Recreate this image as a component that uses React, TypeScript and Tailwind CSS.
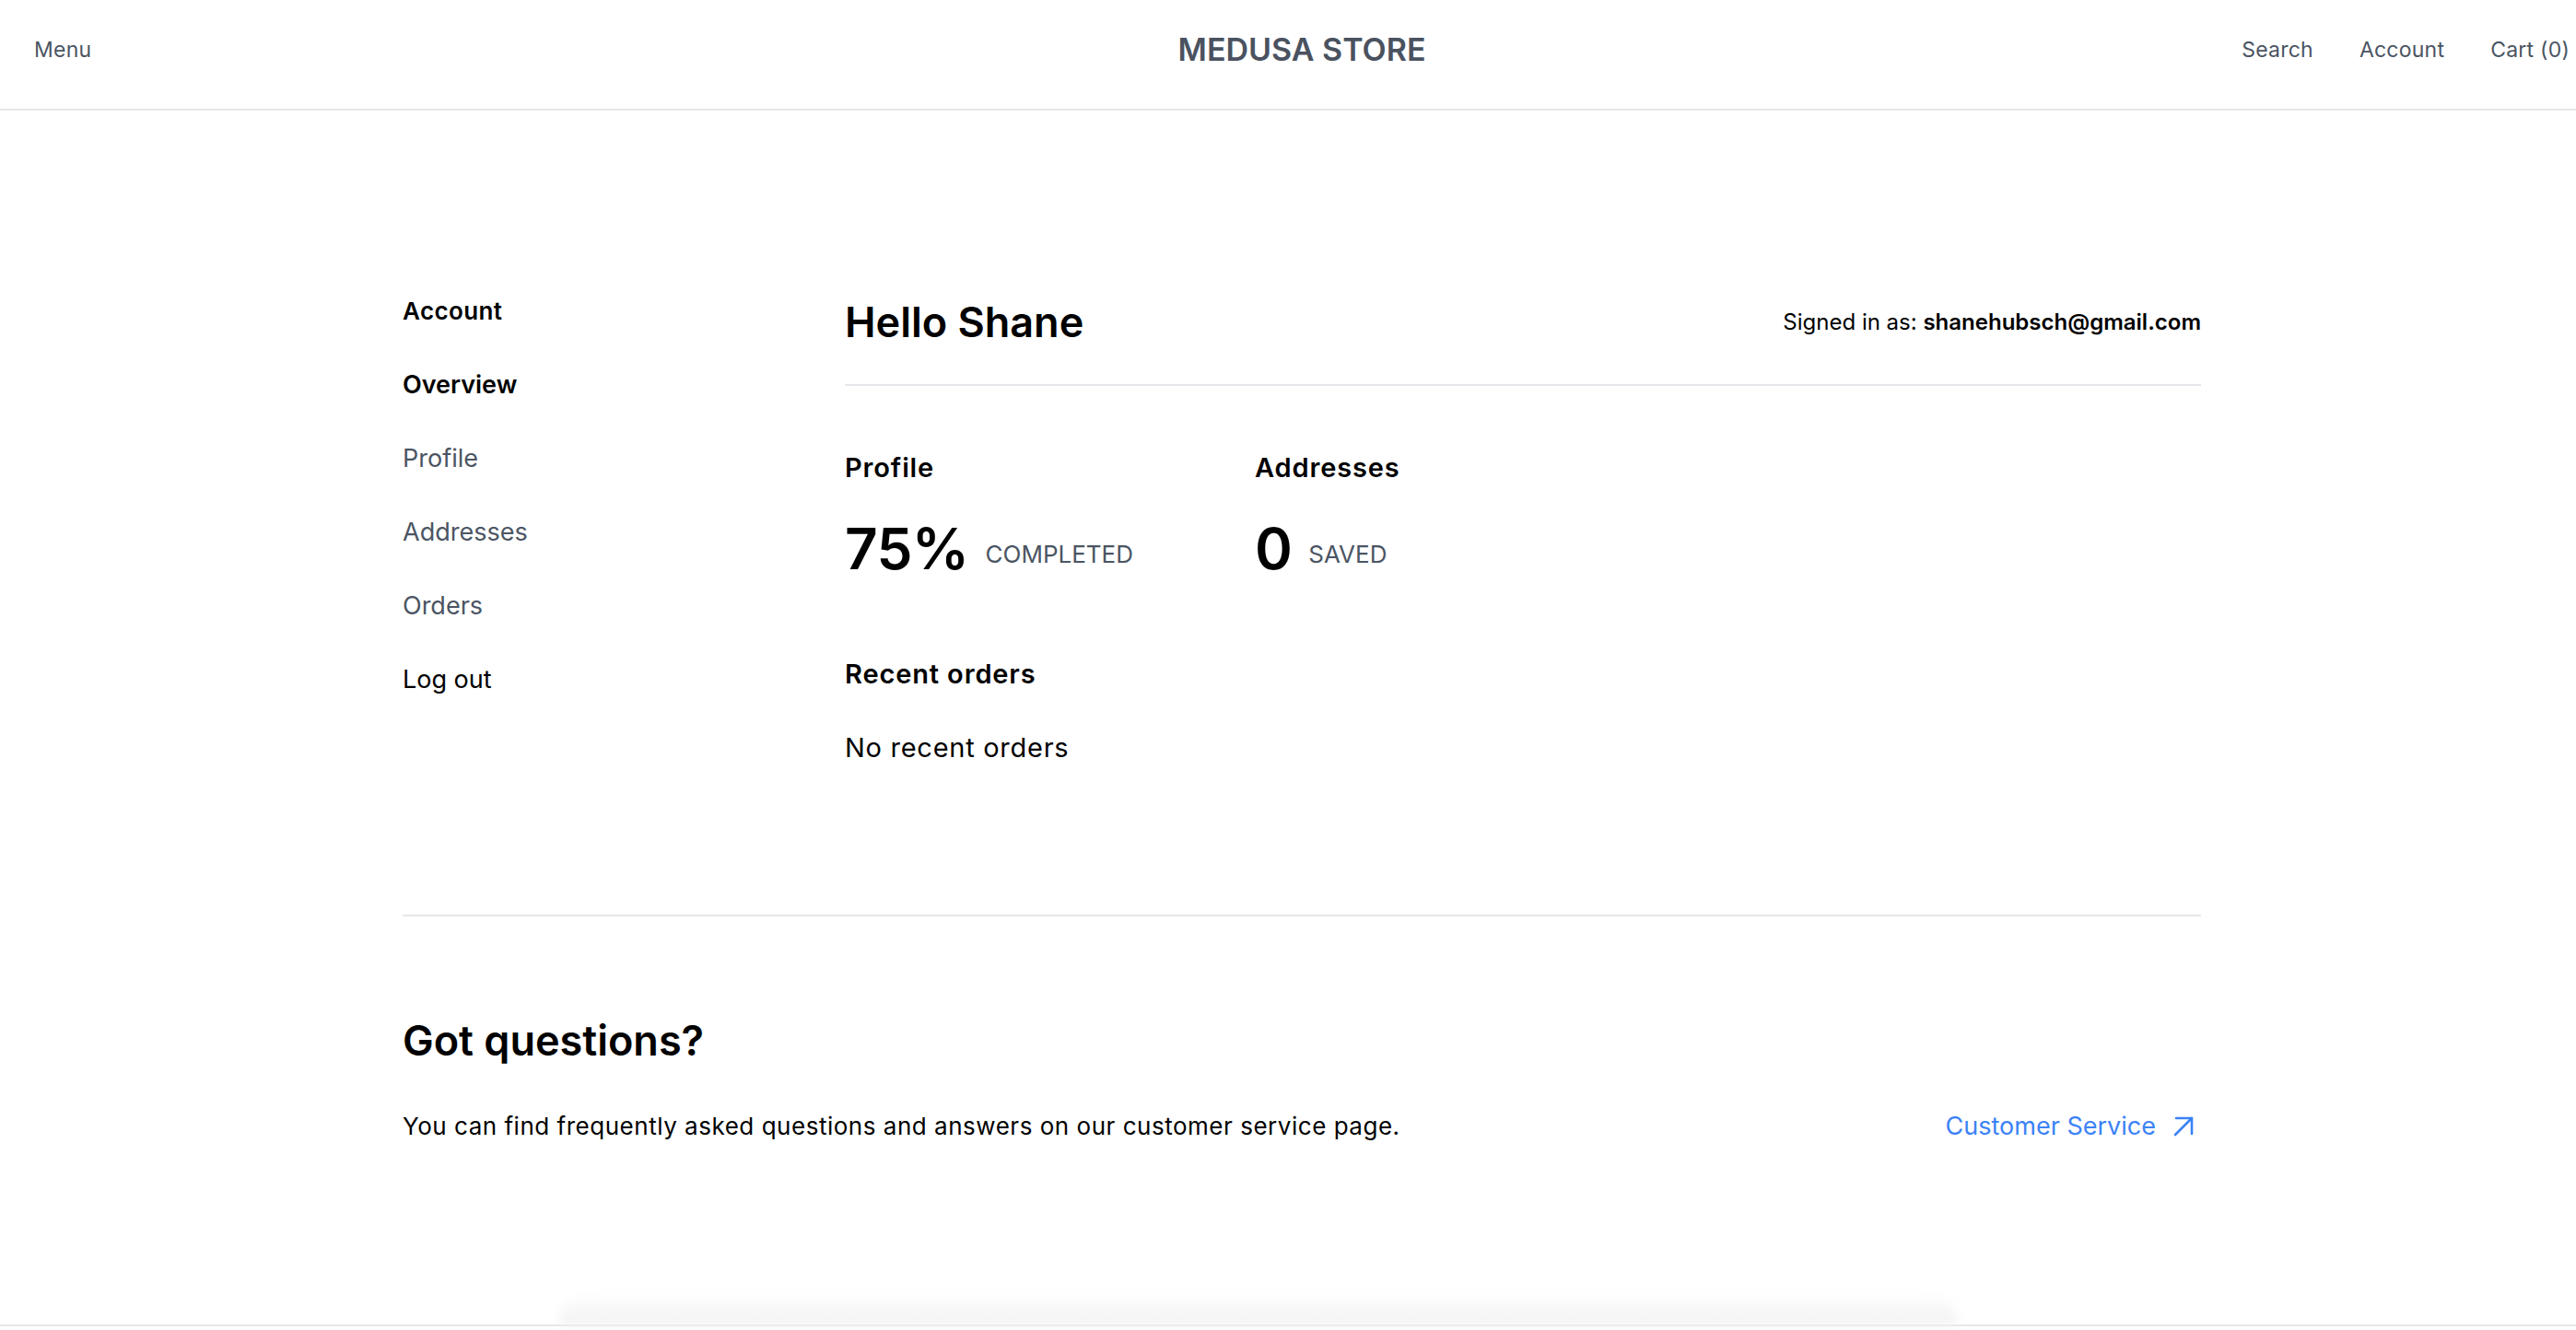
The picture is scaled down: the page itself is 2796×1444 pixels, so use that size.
function Header() {
  return (
    <header className="h-[120px] border-b-2 border-[#e5e7eb] bg-white">
      <nav className="h-full flex items-center px-[37px] pb-[10px] text-[#4b5563]">
        <div className="flex-1 text-[23px] leading-none tracking-[0.01em]">Menu</div>
        <div className="text-[34px] font-semibold uppercase leading-none text-[#4a5260]">Medusa Store</div>
        <div className="flex-1 flex justify-end gap-[50px] text-[23px] leading-none tracking-[0.01em]">
          <span>Search</span>
          <span>Account</span>
          <span>Cart (0)</span>
        </div>
      </nav>
    </header>
  );
}

function Sidebar() {
  return (
    <div className="flex flex-col gap-[53px] leading-none pt-[2px]">
      <h3 className="text-[26px] font-semibold tracking-[0.015em] text-black">Account</h3>
      <span className="text-[27px] font-semibold text-black">Overview</span>
      <span className="text-[27px] text-[#4b5563]">Profile</span>
      <span className="text-[27px] text-[#4b5563]">Addresses</span>
      <span className="text-[27px] text-[#4b5563]">Orders</span>
      <span className="text-[27px] text-black">Log out</span>
    </div>
  );
}

function Stat({ title, value, label, width }: { title: string; value: string; label: string; width?: string }) {
  return (
    <div className={width}>
      <h3 className="text-[29px] font-semibold leading-none tracking-[0.03em] text-black">{title}</h3>
      <div className="mt-[43px] flex items-end gap-[18px]">
        <span className="text-[62px] font-semibold leading-none tracking-[-0.01em] text-black">{value}</span>
        <span className="text-[26px] uppercase leading-none text-[#4b5563] pb-[12px]">{label}</span>
      </div>
    </div>
  );
}

function Overview() {
  return (
    <div className="pt-[4px]">
      <div className="flex items-center justify-between pb-[45px] border-b-2 border-[#e5e7eb]">
        <h1 className="text-[45px] font-semibold leading-none text-black">Hello Shane</h1>
        <span className="text-[24px] leading-none text-black">
          Signed in as: <span className="font-semibold">shanehubsch@gmail.com</span>
        </span>
      </div>
      <div className="mt-[74px] flex">
        <Stat title="Profile" value="75%" label="Completed" width="w-[445px]" />
        <Stat title="Addresses" value="0" label="Saved" />
      </div>
      <h3 className="mt-[90px] text-[29px] font-semibold leading-none tracking-[0.03em] text-black">Recent orders</h3>
      <p className="mt-[51px] text-[29px] leading-none tracking-[0.025em] text-black">No recent orders</p>
    </div>
  );
}

function Questions() {
  return (
    <div className="mt-[167px] border-t-2 border-[#e5e7eb] pt-[112px]">
      <h2 className="text-[45px] font-semibold leading-none text-black">Got questions?</h2>
      <div className="mt-[57px] flex items-center justify-between">
        <p className="text-[26px] leading-none tracking-[0.02em] text-black">
          You can find frequently asked questions and answers on our customer service page.
        </p>
        <a href="#" className="flex items-center gap-[19px] pr-[8px] text-[27px] leading-none text-[#3b82f6]">
          Customer Service
          <svg width="22" height="22" viewBox="0 0 22 22" fill="none" stroke="currentColor" strokeWidth="2.6" strokeLinecap="round" strokeLinejoin="round">
            <path d="M2 20 L20 2" />
            <path d="M3 2 H20 V19" />
          </svg>
        </a>
      </div>
    </div>
  );
}

export default function App() {
  return (
    <div className="w-full overflow-hidden bg-white font-['Inter',sans-serif]">
      <div className="w-[2826px]">
        <Header />
        <main className="w-[1952px] mx-auto pt-[203px]">
          <div className="grid grid-cols-[480px_1fr]">
            <Sidebar />
            <Overview />
          </div>
          <Questions />
        </main>
        {/* soft shadow above the footer line */}
        <div className="mt-[167px] ml-[607px] w-[1518px] h-[35px] rounded-t-[36px] bg-gradient-to-t from-[#f1f1f1] to-white blur-[6px]" />
        <footer className="border-t-2 border-[#e5e7eb] h-[40px] bg-white" />
      </div>
    </div>
  );
}
